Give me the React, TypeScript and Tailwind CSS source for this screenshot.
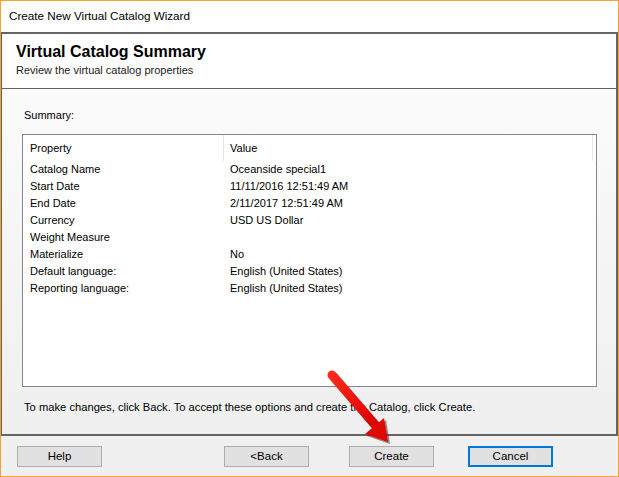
import React from "react";

const rows: [string, string][] = [
  ["Catalog Name", "Oceanside special1"],
  ["Start Date", "11/11/2016 12:51:49 AM"],
  ["End Date", "2/11/2017 12:51:49 AM"],
  ["Currency", "USD US Dollar"],
  ["Weight Measure", ""],
  ["Materialize", "No"],
  ["Default language:", "English (United States)"],
  ["Reporting language:", "English (United States)"],
];

function WinButton({
  label,
  focused,
  className,
}: {
  label: string;
  focused?: boolean;
  className?: string;
}) {
  return (
    <button
      className={
        "flex h-[21px] w-[85px] items-center justify-center bg-[#e1e1e1] text-[11.5px] text-black " +
        (focused ? "border-2 border-[#0078d7] " : "border border-[#adadad] ") +
        (className ?? "")
      }
    >
      {label}
    </button>
  );
}

function RedArrow() {
  return (
    <svg
      className="pointer-events-none absolute left-[318px] top-[362px]"
      width="84"
      height="86"
      viewBox="0 0 84 86"
    >
      <defs>
        <linearGradient id="arrowFill" x1="0" y1="0" x2="1" y2="1">
          <stop offset="0" stopColor="#ff2a1a" />
          <stop offset="1" stopColor="#d80000" />
        </linearGradient>
      </defs>
      {/* shadow */}
      <g transform="translate(2 2)" opacity="0.45">
        <line x1="13" y1="12" x2="57" y2="63" stroke="#3a0000" strokeWidth="9" strokeLinecap="round" />
        <polygon points="46,71 65,55 69,79" fill="#3a0000" />
      </g>
      <line x1="13" y1="12" x2="57" y2="63" stroke="url(#arrowFill)" strokeWidth="9" strokeLinecap="round" />
      <polygon points="46,71 65,55 69,79" fill="#e00a05" />
    </svg>
  );
}

export default function App() {
  return (
    <div className="relative flex h-[477px] w-[619px] flex-col border border-[#f4a32c] bg-[#f0f0f0] font-['Liberation_Sans',Arial,sans-serif] text-black">
      {/* Title bar */}
      <div className="flex h-[31px] items-center bg-white pb-[1px] pl-[8px] text-[11.7px]">
        Create New Virtual Catalog Wizard
      </div>

      {/* Wizard frame */}
      <div className="flex h-[404px] flex-col border-b-2 border-l border-r-2 border-t-2 border-[#646464]">
        {/* Header */}
        <div className="h-[55px] border-b border-[#646464] bg-white pl-[14px] pt-[9px]">
          <div className="text-[16px] font-bold leading-[18px]">Virtual Catalog Summary</div>
          <div className="mt-[3px] text-[11px] leading-[13px] text-[#1a1a1a]">
            Review the virtual catalog properties
          </div>
        </div>

        {/* Body */}
        <div className="flex flex-1 flex-col bg-linear-to-b from-[#fbfbfb] to-[#efefef] pl-[20px]">
          <div className="mt-[20px] pl-[2px] text-[11px] leading-[13px]">Summary:</div>

          <div className="mt-[12px] h-[253px] w-[575px] border border-[#828790] bg-white text-[11px]">
            <div className="flex h-[26px] items-center">
              <div className="flex h-full w-[201px] items-center border-r border-[#e5e5e5] pl-[7px] pt-[1px]">
                Property
              </div>
              <div className="flex h-full w-[369px] items-center border-r border-[#e5e5e5] pl-[6px] pt-[1px]">
                Value
              </div>
            </div>
            {rows.map(([p, v]) => (
              <div key={p} className="flex h-[17px] items-center leading-[13px]">
                <div className="w-[201px] pl-[7px]">{p}</div>
                <div className="pl-[6px]">{v}</div>
              </div>
            ))}
          </div>

          <div className="mt-[14px] pl-[2px] text-[11.2px] leading-[13px]">
            To make changes, click Back. To accept these options and create the Catalog, click Create.
          </div>
        </div>
      </div>

      {/* Footer buttons */}
      <div className="flex flex-1 items-start pl-[16px] pt-[10px]">
        <WinButton label="Help" />
        <WinButton label="<Back" className="ml-[122px]" />
        <WinButton label="Create" className="ml-[40px]" />
        <WinButton label="Cancel" focused className="ml-[34px]" />
      </div>

      <RedArrow />
    </div>
  );
}
